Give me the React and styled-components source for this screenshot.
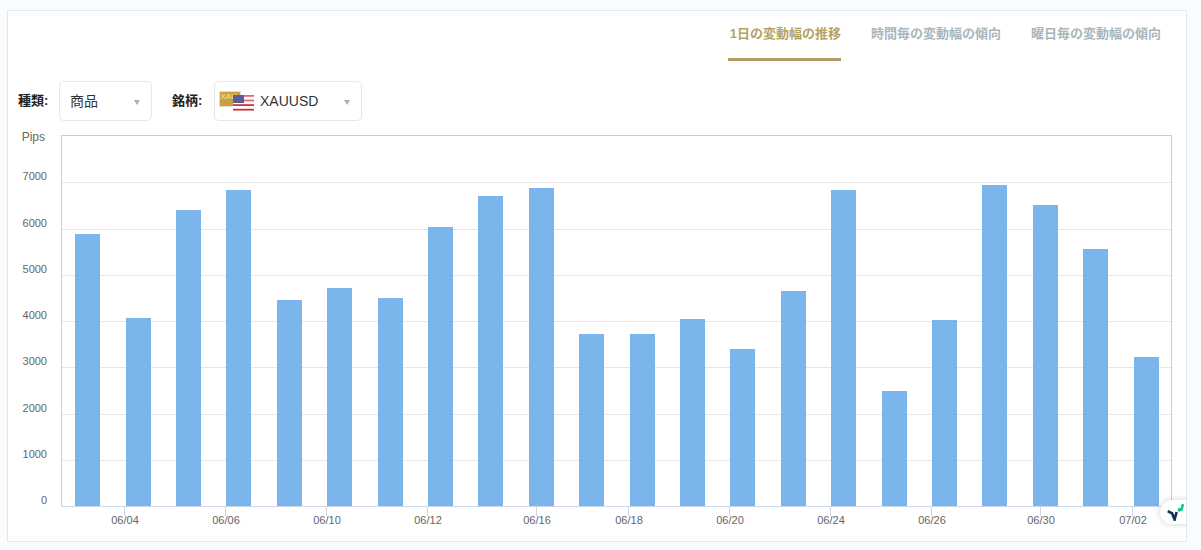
import React from "react";
import styled, { createGlobalStyle } from "styled-components";

const Global = createGlobalStyle`
  html, body { margin: 0; padding: 0; background: #f9fbfd; }
  body { font-family: "Liberation Sans", "Noto Sans CJK JP", sans-serif; }
`;
const Card = styled.main`
  position: relative;
  box-sizing: border-box;
  width: 1180px;
  height: 532px;
  margin: 10px 0 0 7px;
  background: #fff;
  border: 1px solid #dfe8ec;
  overflow: hidden;
`;
const Tabs = styled.nav`
  display: flex;
  justify-content: flex-end;
  gap: 30px;
  height: 50px;
  padding-right: 25px;
`;
const Tab = styled.div`
  box-sizing: border-box;
  height: 50px;
  padding: 14px 0 0 ${(p) => (p.$active ? 2 : 0)}px;
  font: bold 13px/18px "Liberation Sans", "Noto Sans CJK JP", sans-serif;
  color: ${(p) => (p.$active ? "#b5a265" : "#aab6bd")};
  border-bottom: 3px solid ${(p) => (p.$active ? "#b09d65" : "transparent")};
`;
const Filters = styled.div`
  display: flex;
  align-items: center;
  height: 40px;
  margin-top: 20px;
  padding-left: 10px;
`;
const Label = styled.span`
  width: 41px;
  flex: none;
  font: bold 13px/16px "Liberation Sans", "Noto Sans CJK JP", sans-serif;
  color: #222;
  margin-top: -1px;
  &:nth-of-type(2) { width: 42px; }
`;
const Select = styled.div`
  box-sizing: border-box;
  position: relative;
  display: flex;
  align-items: center;
  gap: 5px;
  width: ${(p) => p.$w}px;
  height: 40px;
  margin-right: 20px;
  padding-left: ${(p) => p.$pl}px;
  padding-bottom: ${(p) => p.$pb || 0}px;
  border: 1px solid #dfe8ea;
  border-radius: 5px;
  font-size: 14px;
  color: #333;
  &::after {
    content: "";
    position: absolute;
    right: 11px;
    top: 18px;
    border: 3.5px solid transparent;
    border-top: 5px solid #a5b1bb;
    border-bottom: 0;
  }
`;
const Chart = styled.svg`
  display: block;
  margin-top: 4px;
`;
const AxisText = styled.text`
  font: ${(p) => p.$size || 11}px "Liberation Sans", sans-serif;
  fill: #666;
`;
const Badge = styled.div`
  position: absolute;
  right: -14px;
  top: 489px;
  width: 40px;
  height: 24px;
  display: flex;
  align-items: center;
  padding-left: 6px;
  box-sizing: border-box;
  border-radius: 12px;
  background: #fff;
  box-shadow: 0 0 6px rgba(0, 0, 0, 0.18);
`;

const bars = [[75, 234], [126, 318], [176, 210], [226, 190], [277, 300], [327, 288], [378, 298], [428, 227], [478, 196], [529, 188], [579, 334], [630, 334], [680, 319], [730, 349], [781, 291], [831, 190], [882, 391], [932, 320], [982, 185], [1033, 205], [1083, 249], [1134, 357]];
const grid = [[182, "7000"], [229, "6000"], [275, "5000"], [321, "4000"], [367, "3000"], [414, "2000"], [460, "1000"], [506, "0"]];
const ticks = [[124.5, "06/04"], [225.5, "06/06"], [326.5, "06/10"], [427.5, "06/12"], [536.5, "06/16"], [628.5, "06/18"], [729.5, "06/20"], [830.5, "06/24"], [931.5, "06/26"], [1040.5, "06/30"], [1132.5, "07/02"]];

const FlagIcon = () => (
  <svg width="36" height="20" viewBox="0 0 36 20" style={{ flex: "none" }}>
    <rect x="0.5" y="0.5" width="21" height="15" fill="#c9a23c" stroke="#ddd" />
    <text x="1.5" y="8" fontSize="8" fill="#efe2b8" fontFamily="Liberation Sans">XAU</text>
    <rect x="14" y="4" width="21" height="16" fill="#fff" />
    {[0, 2, 4, 6].map((i) => (
      <rect key={i} x="14" y={4 + i * 2.3} width="21" height="1.8" fill={i < 4 ? "#e36a72" : "#d22f3c"} />
    ))}
    <rect x="14" y="4" width="11" height="8" fill="#5a5f94" />
  </svg>
);

export default function App() {
  return (
    <>
      <Global />
      <Card>
        <Tabs>
          <Tab $active>1日の変動幅の推移</Tab>
          <Tab>時間毎の変動幅の傾向</Tab>
          <Tab>曜日毎の変動幅の傾向</Tab>
        </Tabs>
        <Filters>
          <Label>種類:</Label>
          <Select $w={93} $pl={10} $pb={2}>商品</Select>
          <Label>銘柄:</Label>
          <Select $w={148} $pl={4}><FlagIcon />XAUUSD</Select>
        </Filters>
        <Chart width="1178" height="415" viewBox="8 125 1178 415">
          <rect x="61.5" y="135.5" width="1110" height="371" fill="#fff" stroke="#ccc" />
          {grid.slice(0, 7).map(([y]) => (
            <line key={y} x1="62" x2="1171" y1={y + 0.5} y2={y + 0.5} stroke="#e6e6e6" />
          ))}
          {bars.map(([x, t]) => (
            <rect key={x} x={x} y={t} width="25" height={506 - t} fill="#7cb5ec" />
          ))}
          <line x1="61" x2="1171" y1="506.5" y2="506.5" stroke="#ccd6eb" />
          <AxisText $size={12} x="45" y="141" textAnchor="end">Pips</AxisText>
          {grid.map(([y, l]) => (
            <AxisText key={l} x="47" y={y - 2} textAnchor="end">{l}</AxisText>
          ))}
          {ticks.map(([x, l]) => (
            <g key={l}>
              <line x1={x} x2={x} y1="507" y2="516" stroke="#ccd6eb" />
              <AxisText x={x + 0.5} y="524" textAnchor="middle">{l}</AxisText>
            </g>
          ))}
        </Chart>
        <Badge>
          <svg width="18" height="18" viewBox="0 0 18 18">
            <path d="M1.7 8.2 L6 10.3 L8.6 16.5 L10.6 9" fill="none" stroke="#12304f" strokeWidth="2.6" />
            <path d="M12.7 8.5 L13.6 5 M15 8 L17 1" fill="none" stroke="#12c884" strokeWidth="2.6" />
          </svg>
        </Badge>
      </Card>
    </>
  );
}
